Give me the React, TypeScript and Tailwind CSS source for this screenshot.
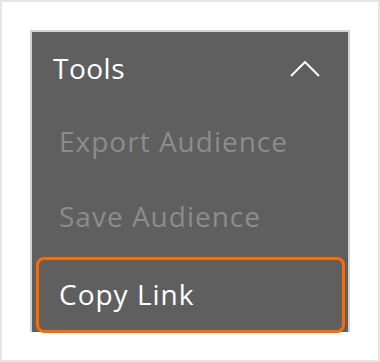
import React from "react";

const App: React.FC = () => {
  return (
    <div
      className="w-[380px] h-[362px] bg-white border-2 border-[#e6e6e6] p-[28px]"
      style={{ fontFamily: '"Open Sans", "Liberation Sans", sans-serif' }}
    >
      {/* Panel */}
      <div className="w-[320px] h-[302px] bg-[#5f5f5f] border-2 border-b-0 border-[#d3d3d3] flex flex-col">
        {/* Header */}
        <div className="h-[71px] flex items-center justify-between pl-[21px] pr-[28px]">
          <span className="text-[28px] leading-[32px] tracking-[0.5px] text-white">Tools</span>
          <svg width="30" height="16" viewBox="0 0 30 16" className="mt-[2px]">
            <polyline points="1,15 15,1 29,15" fill="none" stroke="#ffffff" strokeWidth="2" />
          </svg>
        </div>

        {/* Items */}
        <div className="h-[75px] flex items-center pl-[27px]">
          <span className="text-[28px] leading-[32px] tracking-[1px] text-[#8c8c8c]">Export Audience</span>
        </div>
        <div className="h-[75px] flex items-center pl-[27px]">
          <span className="text-[28px] leading-[32px] tracking-[1px] text-[#8c8c8c]">Save Audience</span>
        </div>
        <div className="h-[76px] mt-[4px] ml-[4px] mr-[3px] -mb-[1px] border-[3px] border-[#ff6a00] rounded-[8px] flex items-center pl-[20px] pb-[3px]">
          <span className="text-[28px] leading-[32px] tracking-[1px] text-white">Copy Link</span>
        </div>
      </div>
    </div>
  );
};

export default App;
